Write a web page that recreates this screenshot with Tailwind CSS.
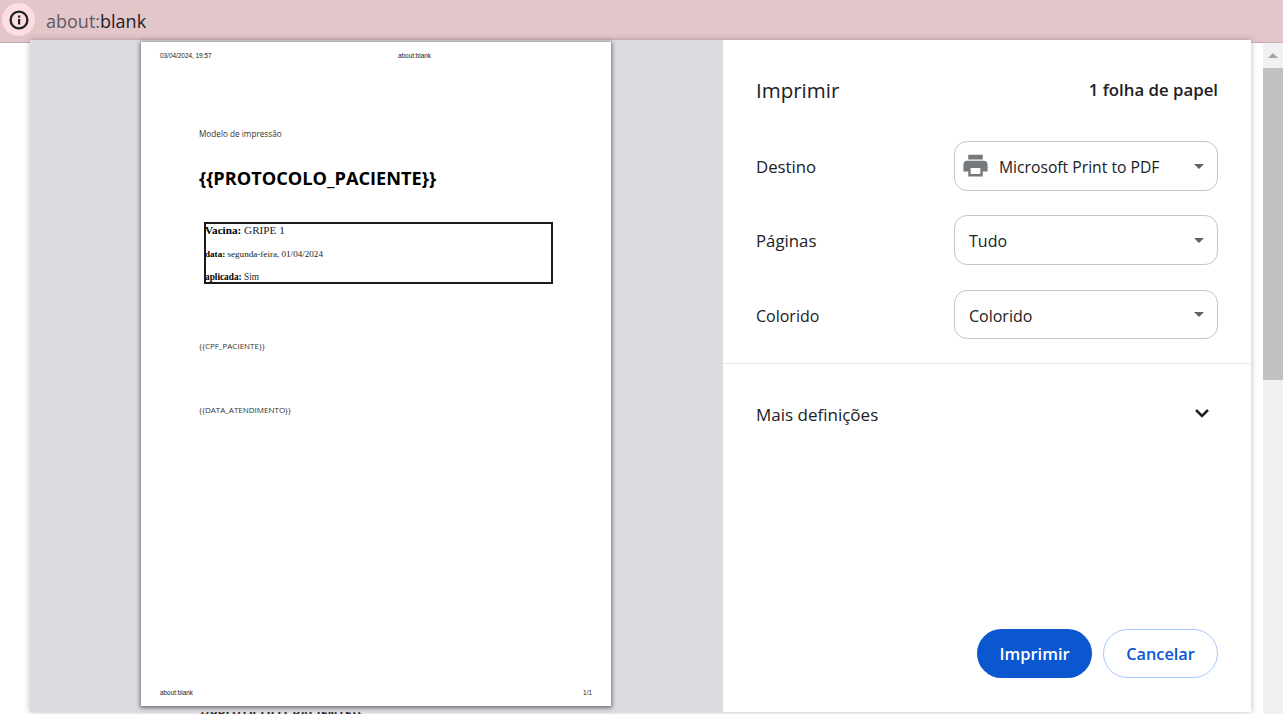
<!DOCTYPE html>
<html><head><meta charset="utf-8"><script src="https://cdn.jsdelivr.net/npm/@tailwindcss/browser@4"></script></head>
<body class="m-0 bg-white">
<div class="relative w-[1283px] h-[714px] overflow-hidden bg-white font-['Open_Sans','Noto_Sans',sans-serif]">
  <header class="h-[43px] bg-[#e2c6ca] border-b border-[#c9a9ae] flex items-center pb-[3px]">
    <div class="ml-[2px] w-[33px] h-[33px] rounded-full bg-[#fbdde2] flex items-center justify-center">
      <svg width="22" height="22" viewBox="0 0 22 22" fill="none"><circle cx="11" cy="11" r="8.4" stroke="#202124" stroke-width="2.3"/><rect x="10" y="10" width="2.2" height="5.5" fill="#202124"/><rect x="10" y="6.5" width="2.2" height="2.2" fill="#202124"/></svg>
    </div>
    <div class="ml-[11px] text-[18px] leading-none text-[#5f5a66] translate-y-[1px]">about:<span class="text-[#202124]">blank</span></div>
  </header>
  <div class="flex h-[671px] justify-end">
    <div class="w-[20px] bg-[#f1f1f1] flex flex-col">
      <div class="h-[25px] flex items-center justify-center"><div class="w-0 h-0 border-x-[5px] border-x-transparent border-b-[5px] border-b-[#a3a3a3]"></div></div>
      <div class="h-[312px] bg-[#c1c1c1]"></div>
    </div>
  </div>
  <div class="absolute left-[200px] top-[708px] text-[12.4px] leading-none font-bold text-[#333] whitespace-nowrap">{{PROTOCOLO_PACIENTE}}</div>

  <div class="absolute left-[30px] top-[40px] w-[1221px] h-[672px] flex bg-white shadow-[0_0_6px_rgba(60,40,45,0.35)]">
    <div class="w-[693px] bg-[#dadce0] pl-[111px] pt-[2px]">
      <div class="w-[470px] h-[664px] bg-white shadow-[0_1px_4px_1px_rgba(40,40,40,0.6)] flex flex-col">
        <div class="flex pt-[9px] pl-[19px] h-[24px] font-['Liberation_Sans',sans-serif] text-[6.4px] leading-[10px] text-[#222]">
          <span class="w-[238px]">03/04/2024, 19:57</span><span>about:blank</span>
        </div>
        <div class="pl-[58px] pt-[62px] flex-1">
          <p class="text-[8.2px] leading-[12px] text-[#333]">Modelo de impressão</p>
          <h1 class="mt-[24px] text-[18.2px] leading-[28px] font-bold text-black whitespace-nowrap">{{PROTOCOLO_PACIENTE}}</h1>
          <div class="mt-[30px] ml-[5px] w-[349px] h-[62px] border-2 border-[#1a1a1a] overflow-hidden font-['Liberation_Serif',serif] text-[#222]">
            <div class="-ml-[1px] -mt-[1px]">
              <p class="text-[11.2px] leading-[14px]"><b class="text-black">Vacina:</b> GRIPE 1</p>
              <p class="mt-[11px] text-[9.1px] leading-[12px]"><b class="text-black">data:</b> segunda-feira, 01/04/2024</p>
              <p class="mt-[11px] text-[9.3px] leading-[12px]"><b class="text-black">aplicada:</b> Sim</p>
            </div>
          </div>
          <p class="mt-[56px] text-[8px] leading-[12px] text-[#333]">{{CPF_PACIENTE}}</p>
          <p class="mt-[52px] text-[8px] leading-[12px] text-[#333]">{{DATA_ATENDIMENTO}}</p>
        </div>
        <div class="flex justify-between px-[19px] pb-[8px] font-['Liberation_Sans',sans-serif] text-[6.4px] leading-[10px] text-[#222]">
          <span>about:blank</span><span>1/1</span>
        </div>
      </div>
    </div>
    <aside class="w-[528px] flex flex-col text-[#202124] text-[16px]">
      <div class="flex items-center justify-between pl-[33px] pr-[33px] pt-[23px] h-[76px]">
        <span class="text-[20.5px] leading-[28px] text-[#202124]">Imprimir</span>
        <span class="text-[16.8px] leading-[24px] font-semibold">1 folha de papel</span>
      </div>
      <div class="flex flex-col pl-[33px] pr-[33px] mt-[25px]">
        <div class="flex items-center justify-between">
          <span class="text-[16.8px] leading-[24px] translate-y-[1px]">Destino</span>
          <div class="w-[264px] h-[50px] border border-[#c6c6c6] rounded-[13px] flex items-center pl-[6px] pr-[13px]">
            <svg width="29" height="29" viewBox="0 0 24 24" fill="#75787c" class="-translate-y-[1px]"><path d="M19 8H5c-1.66 0-3 1.34-3 3v6h4v4h12v-4h4v-6c0-1.66-1.34-3-3-3zm-3 11H8v-5h8v5zM18 3H6v4h12V3z"/></svg>
            <span class="ml-[9px] flex-1 text-[15.7px] translate-y-[2px]">Microsoft Print to PDF</span>
            <div class="w-0 h-0 border-x-[5px] border-x-transparent border-t-[5px] border-t-[#5f6368]"></div>
          </div>
        </div>
        <div class="flex items-center justify-between mt-[24px]">
          <span class="text-[16.8px] leading-[24px] translate-y-[1px]">Páginas</span>
          <div class="w-[264px] h-[50px] border border-[#c6c6c6] rounded-[13px] flex items-center pl-[14px] pr-[13px]">
            <span class="flex-1 translate-y-[1px]">Tudo</span>
            <div class="w-0 h-0 border-x-[5px] border-x-transparent border-t-[5px] border-t-[#5f6368]"></div>
          </div>
        </div>
        <div class="flex items-center justify-between mt-[25px]">
          <span class="translate-y-[1px]">Colorido</span>
          <div class="w-[264px] h-[49px] border border-[#c6c6c6] rounded-[13px] flex items-center pl-[14px] pr-[13px]">
            <span class="flex-1 translate-y-[1px]">Colorido</span>
            <div class="w-0 h-0 border-x-[5px] border-x-transparent border-t-[5px] border-t-[#5f6368]"></div>
          </div>
        </div>
      </div>
      <div class="mt-[24px] border-t border-[#e8e8e8]"></div>
      <div class="flex items-center justify-between pl-[33px] pr-[41px] mt-[37px]">
        <span class="text-[17px] leading-[26px] translate-y-[1px]">Mais definições</span>
        <svg width="16" height="10" viewBox="0 0 16 10" fill="none" class="-translate-y-[1px]"><path d="M2 2l6 6 6-6" stroke="#202124" stroke-width="2.5"/></svg>
      </div>
      <div class="mt-auto flex justify-end gap-[11px] pr-[33px] pb-[34px]">
        <button class="w-[115px] h-[49px] rounded-full bg-[#0b57d0] text-white font-semibold text-[16.5px] pt-[1px]">Imprimir</button>
        <button class="w-[115px] h-[49px] rounded-full bg-white border border-[#a8c7fa] text-[#0b57d0] font-semibold text-[16.3px] pt-[1px]">Cancelar</button>
      </div>
    </aside>
  </div>
</div>
</body></html>
